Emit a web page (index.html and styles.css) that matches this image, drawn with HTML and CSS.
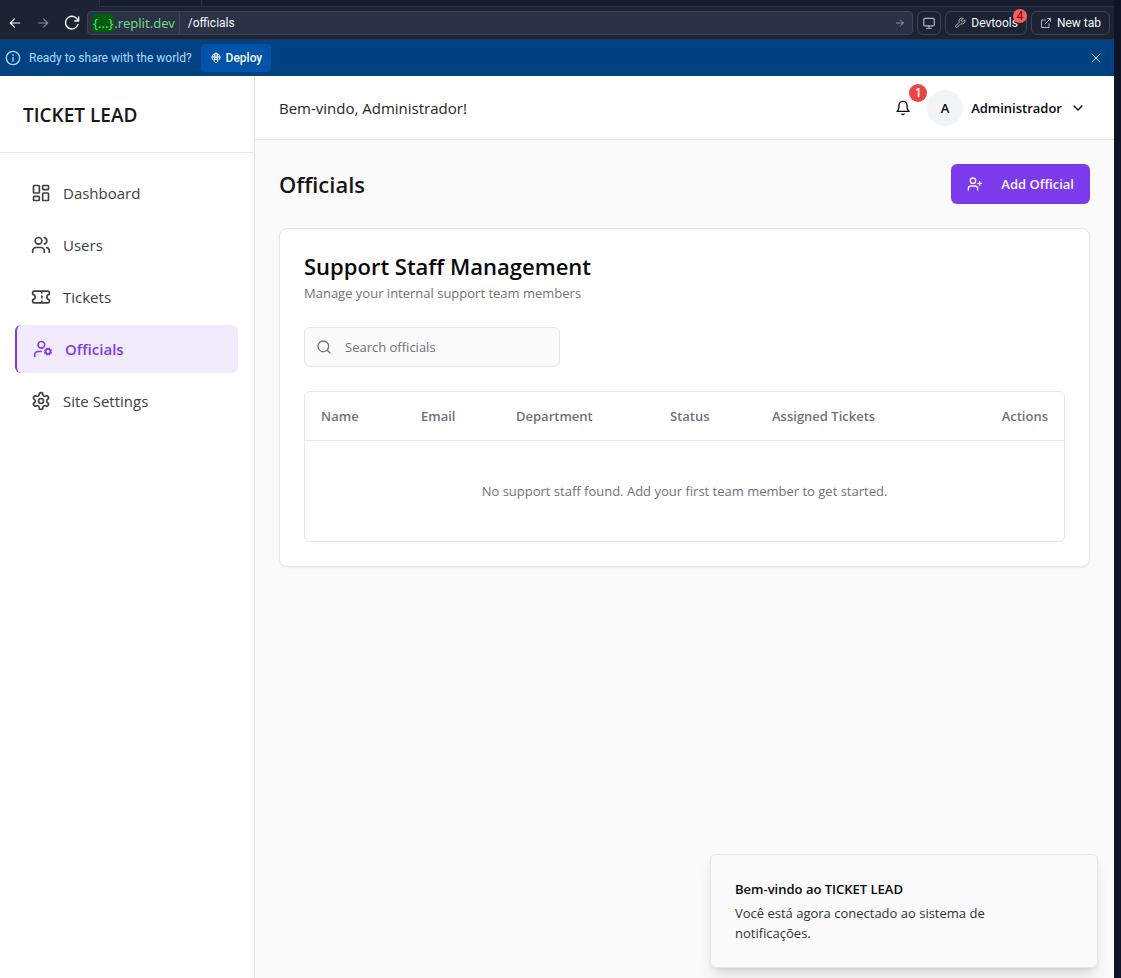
FILE: index.html
```html
<!DOCTYPE html>
<html lang="pt">
<head>
<meta charset="utf-8">
<meta name="viewport" content="width=device-width, initial-scale=1">
<title>Ticket Lead - Officials</title>
<link rel="stylesheet" href="styles.css">
</head>
<body>
<div class="workspace">
  <div class="tabstrip"><span class="tab-gap"></span><span class="tab-rest"></span><span class="tab-rest tab-end"></span></div>
  <div class="toolbar">
    <div class="history">
      <button class="tool-btn" aria-label="Back"><svg class="icon-14" viewBox="0 0 24 24"><path d="M20 12H4M11 5l-7 7 7 7"/></svg></button>
      <button class="tool-btn dim" aria-label="Forward"><svg class="icon-14" viewBox="0 0 24 24"><path d="M4 12h16M13 5l7 7-7 7"/></svg></button>
      <button class="tool-btn" aria-label="Reload"><svg class="icon-16" viewBox="0 0 24 24"><path d="M22 3v6h-6M21 9A9.500 9.500 0 1 0 21 14"/></svg></button>
    </div>
    <div class="address">
      <button class="domain"><span class="domain-chip">{...}</span>.replit.dev</button>
      <input class="path" aria-label="Path" value="/officials">
      <button class="go" aria-label="Go"><svg class="icon-10" viewBox="0 0 24 24"><path d="M3 12h17M13 5l7 7-7 7"/></svg></button>
    </div>
    <button class="outline-btn screen-btn" aria-label="Screen size"><svg class="icon-14" viewBox="0 0 24 24"><rect x="3" y="4" width="18" height="13" rx="2"/><path d="M12 17v3M8 21h8"/></svg></button>
    <button class="outline-btn devtools"><svg class="icon-12" viewBox="0 0 24 24"><path d="M14.700 6.300a1 1 0 0 0 0 1.400l1.600 1.600a1 1 0 0 0 1.400 0l3.770-3.770a6 6 0 0 1-7.940 7.940l-6.910 6.910a2.120 2.120 0 0 1-3-3l6.910-6.910a6 6 0 0 1 7.940-7.940l-3.760 3.760z"/></svg>Devtools<span class="count">4</span></button>
    <button class="outline-btn"><svg class="icon-12" viewBox="0 0 24 24"><path d="M15 3h6v6M10 14 21 3M18 13v8H3V6h8"/></svg>New tab</button>
  </div>
  <div class="banner">
    <svg class="icon-16" viewBox="0 0 24 24"><circle cx="12" cy="12" r="10"/><path d="M12 11v6M12 7v1"/></svg>
    <span class="banner-text">Ready to share with the world?</span>
    <button class="deploy"><svg class="icon-12" viewBox="0 0 24 24"><path d="M6 16a8 8 0 1 1 12 0M9 14c-2-4-1-9 3-12 4 3 5 8 3 12M4 10h16M12 2v12M9 15h6v4l-3 3-3-3z"/></svg>Deploy</button>
    <button class="close" aria-label="Close"><svg class="icon-12" viewBox="0 0 24 24"><path d="M4 4l16 16M20 4L4 20"/></svg></button>
  </div>

  <div class="app">
    <aside class="sidebar">
      <div class="brand">TICKET LEAD</div>
      <nav class="nav">
        <a class="nav-link" href="#"><svg class="icon-20" viewBox="0 0 24 24"><rect x="3" y="3" width="7" height="9" rx="1"/><rect x="14" y="3" width="7" height="5" rx="1"/><rect x="14" y="12" width="7" height="9" rx="1"/><rect x="3" y="16" width="7" height="5" rx="1"/></svg>Dashboard</a>
        <a class="nav-link" href="#"><svg class="icon-20" viewBox="0 0 24 24"><path d="M16 21v-2a4 4 0 0 0-4-4H6a4 4 0 0 0-4 4v2"/><circle cx="9" cy="7" r="4"/><path d="M22 21v-2a4 4 0 0 0-3-3.870M16 3.130a4 4 0 0 1 0 7.750"/></svg>Users</a>
        <a class="nav-link" href="#"><svg class="icon-20" viewBox="0 0 24 24"><path d="M2 9a3 3 0 0 1 0 6v2a2 2 0 0 0 2 2h16a2 2 0 0 0 2-2v-2a3 3 0 0 1 0-6V7a2 2 0 0 0-2-2H4a2 2 0 0 0-2 2zM13 5v2M13 17v2M13 11v2"/></svg>Tickets</a>
        <a class="nav-link active" href="#" aria-current="page"><svg class="icon-20" viewBox="0 0 24 24"><circle cx="10" cy="7" r="4"/><path d="M10 15H6a4 4 0 0 0-4 4v2"/><circle cx="18" cy="15" r="3"/><path d="m21.700 16.400-.9-.3M15.200 13.900l-.9-.3M16.600 18.700l.3-.9M19.100 12.200l.3-.9M19.600 18.700l-.4-1M16.800 12.300l-.4-1M14.300 16.600l1-.4M20.700 13.800l1-.4"/></svg>Officials</a>
        <a class="nav-link" href="#"><svg class="icon-20" viewBox="0 0 24 24"><path d="M12.220 2h-.44a2 2 0 0 0-2 2v.18a2 2 0 0 1-1 1.730l-.43.25a2 2 0 0 1-2 0l-.15-.08a2 2 0 0 0-2.730.73l-.22.38a2 2 0 0 0 .73 2.730l.15.1a2 2 0 0 1 1 1.720v.51a2 2 0 0 1-1 1.740l-.15.09a2 2 0 0 0-.73 2.730l.22.38a2 2 0 0 0 2.730.73l.15-.08a2 2 0 0 1 2 0l.43.25a2 2 0 0 1 1 1.730V20a2 2 0 0 0 2 2h.44a2 2 0 0 0 2-2v-.18a2 2 0 0 1 1-1.730l.43-.25a2 2 0 0 1 2 0l.15.08a2 2 0 0 0 2.730-.73l.22-.39a2 2 0 0 0-.73-2.730l-.15-.08a2 2 0 0 1-1-1.740v-.5a2 2 0 0 1 1-1.740l.15-.09a2 2 0 0 0 .73-2.730l-.22-.38a2 2 0 0 0-2.730-.73l-.15.08a2 2 0 0 1-2 0l-.43-.25a2 2 0 0 1-1-1.730V4a2 2 0 0 0-2-2z"/><circle cx="12" cy="12" r="3"/></svg>Site Settings</a>
      </nav>
    </aside>

    <div class="main">
      <header class="topbar">
        <p class="greeting">Bem-vindo, Administrador!</p>
        <div class="account">
          <button class="bell" aria-label="Notifications"><svg class="icon-16" viewBox="0 0 24 24"><path d="M6 8a6 6 0 0 1 12 0c0 7 3 9 3 9H3s3-2 3-9M10.300 21a1.940 1.940 0 0 0 3.400 0"/></svg><span class="bell-count">1</span></button>
          <button class="profile"><span class="avatar">A</span>Administrador<svg class="icon-16" viewBox="0 0 24 24"><path d="m6 9 6 6 6-6"/></svg></button>
        </div>
      </header>

      <main class="content">
        <div class="page-head">
          <h1 class="page-title">Officials</h1>
          <button class="add-btn"><svg class="icon-16" viewBox="0 0 24 24"><path d="M16 21v-2a4 4 0 0 0-4-4H6a4 4 0 0 0-4 4v2"/><circle cx="9" cy="7" r="4"/><path d="M19 8v6M22 11h-6"/></svg>Add Official</button>
        </div>

        <section class="card">
          <h2 class="card-title">Support Staff Management</h2>
          <p class="card-sub">Manage your internal support team members</p>
          <label class="search">
            <svg class="icon-16" viewBox="0 0 24 24"><circle cx="11" cy="11" r="8"/><path d="m21 21-4-4"/></svg>
            <input class="search-input" type="search" placeholder="Search officials" aria-label="Search officials">
          </label>
          <div class="table-box">
            <table class="table">
              <thead>
                <tr><th class="col-name">Name</th><th class="col-email">Email</th><th class="col-dept">Department</th><th class="col-status">Status</th><th>Assigned Tickets</th><th class="col-actions">Actions</th></tr>
              </thead>
              <tbody>
                <tr><td class="empty" colspan="6">No support staff found. Add your first team member to get started.</td></tr>
              </tbody>
            </table>
          </div>
        </section>
      </main>
    </div>

    <div class="toast" role="status">
      <strong class="toast-title">Bem-vindo ao TICKET LEAD</strong>
      <p class="toast-text">Você está agora conectado ao sistema de notificações.</p>
    </div>
  </div>
</div>
</body>
</html>
```

FILE: styles.css
```css
* { box-sizing: border-box; }

body {
  margin: 0;
  background: #0e1525;
  font-family: "Open Sans", "Noto Sans", sans-serif;
  font-size: 13px;
  line-height: 20px;
}

h1, h2, p { margin: 0; }
button, input { font: inherit; color: inherit; border: 0; background: none; padding: 0; }
button { cursor: pointer; }

svg {
  flex: none;
  fill: none;
  stroke: currentColor;
  stroke-width: 2;
  stroke-linecap: round;
  stroke-linejoin: round;
}
.icon-10 { width: 10px; height: 10px; }
.icon-12 { width: 12px; height: 12px; }
.icon-14 { width: 14px; height: 14px; }
.icon-16 { width: 16px; height: 16px; }
.icon-20 { width: 20px; height: 20px; }

.workspace {
  display: flex;
  flex-direction: column;
  min-height: 100vh;
  margin-right: 7px;
}

/* Browser chrome */
.tabstrip {
  display: flex;
  height: 7px;
  background: #171d2d;
}
.tab-gap { width: 99px; background: #1c2333; }
.tab-rest { width: 102px; border-left: 1px solid #2b3245; border-bottom: 1px solid #2b3245; }
.tab-end { flex: 1; }

.toolbar, .banner { font-family: Roboto, sans-serif; font-size: 12px; }
.toolbar {
  display: flex;
  align-items: center;
  gap: 4px;
  height: 33px;
  padding: 0 4px 0 8px;
  background: #1c2333;
  border-bottom: 1px solid #2b3245;
  color: #f5f9fc;
}
.history { display: flex; align-items: center; gap: 14px; margin-right: 3px; }
.tool-btn { display: flex; }
.dim { color: #848b98; }

.address {
  flex: 1;
  display: flex;
  height: 24px;
  border: 1px solid #3c445c;
  border-radius: 4px;
  background: #2b3245;
}
.domain {
  display: flex;
  align-items: center;
  padding: 0 4px;
  border-right: 1px solid #3c445c;
  color: #6cd97e;
  font-family: "Noto Sans", sans-serif;
  font-size: 13px;
  line-height: 18px;
}
.domain-chip { padding: 0 1px; border-radius: 4px; background: #005c0f; }
.path { flex: 1; min-width: 0; padding: 0 8px; }
.go { padding: 0 7px; color: #9da2a6; display: flex; align-items: center; }

.outline-btn {
  position: relative;
  display: flex;
  align-items: center;
  gap: 5px;
  height: 24px;
  padding: 0 8px;
  border: 1px solid #3c445c;
  border-radius: 6px;
  color: #f5f9fc;
}
.outline-btn svg { color: #b0b6c0; }
.screen-btn { padding: 0 4px; }
.count {
  position: absolute;
  top: -3px;
  right: -1px;
  width: 14px;
  height: 14px;
  border-radius: 50%;
  background: #ff5c5c;
  color: #660a0a;
  line-height: 14px;
}

.banner {
  display: flex;
  align-items: center;
  height: 36px;
  padding: 0 12px 0 5px;
  background: #004182;
  color: #b3d9ff;
}
.banner-text { margin: 0 9px 0 8px; }
.deploy {
  display: flex;
  align-items: center;
  gap: 4px;
  height: 28px;
  padding: 0 9px;
  border-radius: 4px;
  background: #0053a6;
  color: #f5f9fc;
  font-weight: 500;
}
.close { display: flex; margin-left: auto; }

/* Application */
.app {
  position: relative;
  flex: 1;
  display: flex;
  background: #fafafa;
}
.sidebar {
  flex: none;
  width: 255px;
  background: #fff;
  border-right: 1px solid #e5e5e5;
}
.brand {
  padding: 25px 23px 23px;
  border-bottom: 1px solid #e5e5e5;
  color: #171717;
  font-size: 19px;
  font-weight: 600;
  line-height: 28px;
}
.nav {
  display: flex;
  flex-direction: column;
  gap: 4px;
  padding: 16px 16px 16px 15px;
}
.nav-link {
  display: flex;
  align-items: center;
  gap: 12px;
  height: 48px;
  padding: 0 16px;
  border-radius: 6px;
  color: #404040;
  font-size: 15px;
  text-decoration: none;
}
.active {
  border-left: 2px solid #7c3aed;
  background: #f2ebfd;
  color: #7c3aed;
  font-weight: 600;
}

.main { flex: 1; min-width: 0; }
.topbar {
  display: flex;
  align-items: center;
  justify-content: space-between;
  height: 64px;
  padding: 0 24px;
  background: #fff;
  border-bottom: 1px solid #e5e5e5;
}
.greeting { color: #262626; font-size: 15px; }
.account { display: flex; align-items: center; gap: 8px; color: #09090b; }
.bell { position: relative; display: flex; padding: 12px; }
.bell-count {
  position: absolute;
  top: -4px;
  right: -4px;
  width: 18px;
  height: 18px;
  border-radius: 50%;
  background: #ef4444;
  color: #fff;
  font-size: 12px;
  font-weight: 600;
  line-height: 18px;
}
.profile { display: flex; align-items: center; gap: 8px; margin: 0 4px 0 -4px; font-weight: 600; }
.avatar {
  width: 36px;
  height: 36px;
  border-radius: 50%;
  background: #f3f4f6;
  line-height: 36px;
}

.content { padding: 24px; }
.page-head { display: flex; align-items: center; justify-content: space-between; margin-bottom: 24px; }
.page-title { color: #171717; font-size: 22px; font-weight: 600; line-height: 32px; }
.add-btn {
  display: flex;
  align-items: center;
  gap: 18px;
  height: 40px;
  padding: 0 16px;
  border-radius: 6px;
  background: #7c3aed;
  color: #faf5ff;
  font-weight: 600;
}

.card {
  padding: 24px;
  border: 1px solid #e5e7eb;
  border-radius: 8px;
  background: #fff;
  box-shadow: 0 1px 2px rgba(0, 0, 0, 0.06);
}
.card-title { color: #09090b; font-size: 22px; font-weight: 600; line-height: 26px; }
.card-sub { margin: 4px 0 24px; color: #71717a; }

.search {
  display: flex;
  align-items: center;
  gap: 13px;
  width: 256px;
  height: 40px;
  margin-bottom: 24px;
  padding: 0 11px;
  border: 1px solid #e5e7eb;
  border-radius: 6px;
  background: #fafafa;
  color: #737373;
}
.search-input { flex: 1; min-width: 0; outline: 0; }
.search-input::placeholder { color: #71717a; opacity: 1; }

.table-box { border: 1px solid #e5e7eb; border-radius: 6px; }
.table { width: 100%; border-collapse: collapse; table-layout: fixed; color: #71717a; }
.table th {
  height: 48px;
  padding: 0 16px;
  border-bottom: 1px solid #e5e7eb;
  font-weight: 600;
  text-align: left;
}
.col-name { width: 100px; }
.col-email { width: 95px; }
.col-dept { width: 154px; }
.col-status { width: 102px; }
.table .col-actions { width: 19%; text-align: right; }
.table .empty { padding: 40px 16px; text-align: center; }

.toast {
  position: absolute;
  right: 16px;
  bottom: 10px;
  width: 388px;
  padding: 24px 80px 24px 24px;
  border: 1px solid #e5e7eb;
  border-radius: 6px;
  background: #fafafa;
  box-shadow: 0 10px 15px -3px rgba(0, 0, 0, 0.12), 0 4px 6px -4px rgba(0, 0, 0, 0.12);
  color: #09090b;
}
.toast-title { display: block; margin-bottom: 4px; font-weight: 600; }
.toast-text { color: #303035; }
```
